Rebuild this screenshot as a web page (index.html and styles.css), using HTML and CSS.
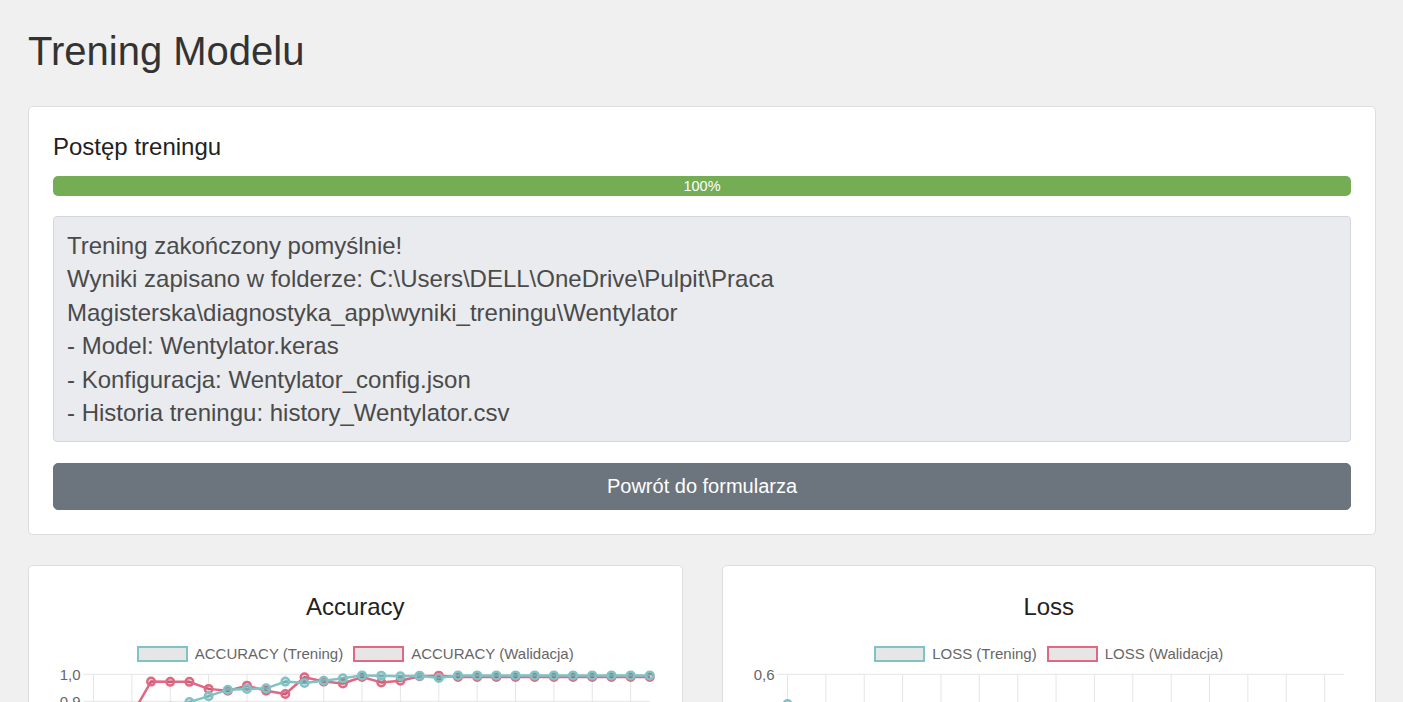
FILE: index.html
```html
<!DOCTYPE html>
<html lang="pl">
<head>
<meta charset="utf-8">
<title>Trening Modelu</title>
<link rel="stylesheet" href="styles.css">
</head>
<body>
<div class="page">
  <h1 class="page-title">Trening Modelu</h1>

  <section class="card">
    <h2 class="card-heading">Postęp treningu</h2>
    <div class="progress">
      <div class="progress-bar" style="width: 100%">100%</div>
    </div>
    <div class="log">
      <div>Trening zakończony pomyślnie!</div>
      <div>Wyniki zapisano w folderze: C:\Users\DELL\OneDrive\Pulpit\Praca Magisterska\diagnostyka_app\wyniki_treningu\Wentylator</div>
      <div>- Model: Wentylator.keras</div>
      <div>- Konfiguracja: Wentylator_config.json</div>
      <div>- Historia treningu: history_Wentylator.csv</div>
    </div>
    <button class="btn" type="button">Powrót do formularza</button>
  </section>

  <div class="charts">
    <section class="card chart-card">
      <h3 class="chart-title">Accuracy</h3>
      <div class="legend">
        <div class="legend-item"><span class="legend-box teal"></span><span class="legend-label">ACCURACY (Trening)</span></div>
        <div class="legend-item"><span class="legend-box red"></span><span class="legend-label">ACCURACY (Walidacja)</span></div>
      </div>
      <svg class="plot" id="chart-acc" xmlns="http://www.w3.org/2000/svg"></svg>
    </section>
    <section class="card chart-card">
      <h3 class="chart-title">Loss</h3>
      <div class="legend">
        <div class="legend-item"><span class="legend-box teal"></span><span class="legend-label">LOSS (Trening)</span></div>
        <div class="legend-item"><span class="legend-box red"></span><span class="legend-label">LOSS (Walidacja)</span></div>
      </div>
      <svg class="plot" id="chart-loss" xmlns="http://www.w3.org/2000/svg"></svg>
    </section>
  </div>
</div>
<script src="script.js"></script>
</body>
</html>
```

FILE: styles.css
```css
* {
  box-sizing: border-box;
}

html, body {
  margin: 0;
  padding: 0;
}

body {
  background: #f0f0f0;
  font-family: "Liberation Sans", Arial, sans-serif;
  color: #222;
}

.page {
  padding: 27px 27px 40px 28px;
}

.page-title {
  margin: 0 0 31px;
  font-size: 40px;
  line-height: 48px;
  font-weight: 400;
  color: #333;
}

.card {
  background: #fff;
  border: 1px solid #dedede;
  border-radius: 5px;
  padding: 24px;
}

.card-heading {
  margin: 0 0 13px;
  font-size: 24px;
  line-height: 32px;
  font-weight: 400;
  color: #222;
}

.progress {
  height: 20px;
  background: #e9ecef;
  border-radius: 5px;
  overflow: hidden;
  display: flex;
}

.progress-bar {
  background: #75ad55;
  color: #fff;
  font-size: 14.5px;
  line-height: 20px;
  text-align: center;
}

.log {
  margin-top: 20px;
  background: #e9ebee;
  border: 1px solid #d4d7db;
  border-radius: 4px;
  padding: 12px 13px 12px;
  font-size: 24px;
  line-height: 33.4px;
  color: #4a4a4a;
}

.btn {
  display: block;
  width: 100%;
  margin-top: 21px;
  padding: 8px 16px;
  border: 1px solid #6c757d;
  border-radius: 5px;
  background: #6c757d;
  color: #fff;
  font-family: "Liberation Sans", Arial, sans-serif;
  font-size: 20px;
  line-height: 29px;
  cursor: pointer;
}

.charts {
  margin-top: 30px;
  display: grid;
  grid-template-columns: 1fr 1fr;
  column-gap: 39px;
}

.chart-card {
  padding-bottom: 24px;
}

.chart-title {
  margin: 0;
  font-size: 24px;
  line-height: 34px;
  font-weight: 400;
  text-align: center;
  color: #222;
}

.legend {
  margin-top: 22px;
  display: flex;
  justify-content: center;
  gap: 10px;
  height: 15px;
}

.legend-item {
  display: flex;
  align-items: center;
  gap: 7px;
}

.legend-box {
  width: 51px;
  height: 16px;
  background: #e6e6e6;
  border: 2.5px solid;
}

.legend-box.teal {
  border-color: #80c3c4;
}

.legend-box.red {
  border-color: #e06884;
}

.legend-label {
  font-size: 15px;
  line-height: 15px;
  color: #666;
  white-space: nowrap;
}

.plot {
  display: block;
  width: 100%;
  height: 240px;
}
```

FILE: script.js
```js
(function () {
  var TEAL = "#80c3c4";
  var RED = "#e06884";
  var NS = "http://www.w3.org/2000/svg";

  var charts = {
    "chart-acc": {
      max: 1.0,
      ticks: 7,
      spacing: 27,
      series: [
        { color: RED, values: [0.70, 0.79, 0.85, 0.973, 0.972, 0.972, 0.946, 0.939, 0.958, 0.939, 0.927, 0.989, 0.973, 0.966, 0.990, 0.970, 0.976, 0.993, 0.995, 0.990, 0.990, 0.990, 0.990, 0.990, 0.990, 0.990, 0.990, 0.990, 0.990, 0.990] },
        { color: TEAL, values: [0.62, 0.76, 0.83, 0.86, 0.88, 0.897, 0.919, 0.943, 0.946, 0.948, 0.973, 0.968, 0.976, 0.985, 0.996, 0.995, 0.993, 0.995, 0.986, 0.996, 0.996, 0.996, 0.996, 0.996, 0.996, 0.996, 0.996, 0.996, 0.996, 0.996] }
      ]
    },
    "chart-loss": {
      max: 0.6,
      ticks: 6,
      spacing: 33,
      series: [
        { color: RED, values: [0.40, 0.25, 0.18, 0.12, 0.11, 0.10, 0.16, 0.17, 0.13, 0.17, 0.20, 0.05, 0.09, 0.10, 0.04, 0.09, 0.08, 0.03, 0.02, 0.03, 0.03, 0.03, 0.03, 0.03, 0.03, 0.03, 0.03, 0.03, 0.03, 0.03] },
        { color: TEAL, values: [0.51, 0.34, 0.26, 0.22, 0.19, 0.17, 0.15, 0.13, 0.12, 0.11, 0.08, 0.09, 0.07, 0.05, 0.02, 0.02, 0.03, 0.02, 0.04, 0.01, 0.01, 0.01, 0.01, 0.01, 0.01, 0.01, 0.01, 0.01, 0.01, 0.01] }
      ]
    }
  };

  function el(name, attrs) {
    var e = document.createElementNS(NS, name);
    for (var k in attrs) e.setAttribute(k, attrs[k]);
    return e;
  }

  Object.keys(charts).forEach(function (id) {
    var svg = document.getElementById(id);
    var cfg = charts[id];
    var W = svg.getBoundingClientRect().width;
    var left = 40.5, right = W - 7.7, top = 13.3;
    var bottom = top + cfg.ticks * cfg.spacing;
    var tickStep = 0.1;
    var unit = cfg.spacing / tickStep;
    var n = cfg.series[0].values.length;
    var step = (right - left) / (n - 1);
    function y(v) { return top + (cfg.max - v) * unit; }
    function x(i) { return left + i * step; }

    var grid = el("g", { stroke: "#e5e5e5", "stroke-width": "1" });
    for (var k = 0; k <= cfg.ticks; k++) {
      var v = cfg.max - k * tickStep;
      var yy = y(v);
      grid.appendChild(el("line", { x1: left - 10, x2: right, y1: yy, y2: yy }));
      var t = el("text", {
        x: left - 13, y: yy + 5.4, "text-anchor": "end",
        "font-family": "Liberation Sans, Arial, sans-serif", "font-size": "15", fill: "#666", stroke: "none"
      });
      t.textContent = v.toFixed(1).replace(".", ",");
      grid.appendChild(t);
    }
    for (var i = 0; i < n - 1; i += 2) {
      grid.appendChild(el("line", { x1: x(i), x2: x(i), y1: top, y2: bottom + 10 }));
    }
    svg.appendChild(grid);

    cfg.series.forEach(function (s) {
      var pts = s.values.map(function (v, i) { return x(i).toFixed(2) + "," + y(v).toFixed(2); }).join(" ");
      svg.appendChild(el("polyline", { points: pts, fill: "none", stroke: s.color, "stroke-width": "2.5", "stroke-linejoin": "round" }));
      s.values.forEach(function (v, i) {
        svg.appendChild(el("circle", { cx: x(i), cy: y(v), r: "3.75", fill: "rgba(0,0,0,0.1)", stroke: s.color, "stroke-width": "2.5" }));
      });
    });
  });
})();
```
